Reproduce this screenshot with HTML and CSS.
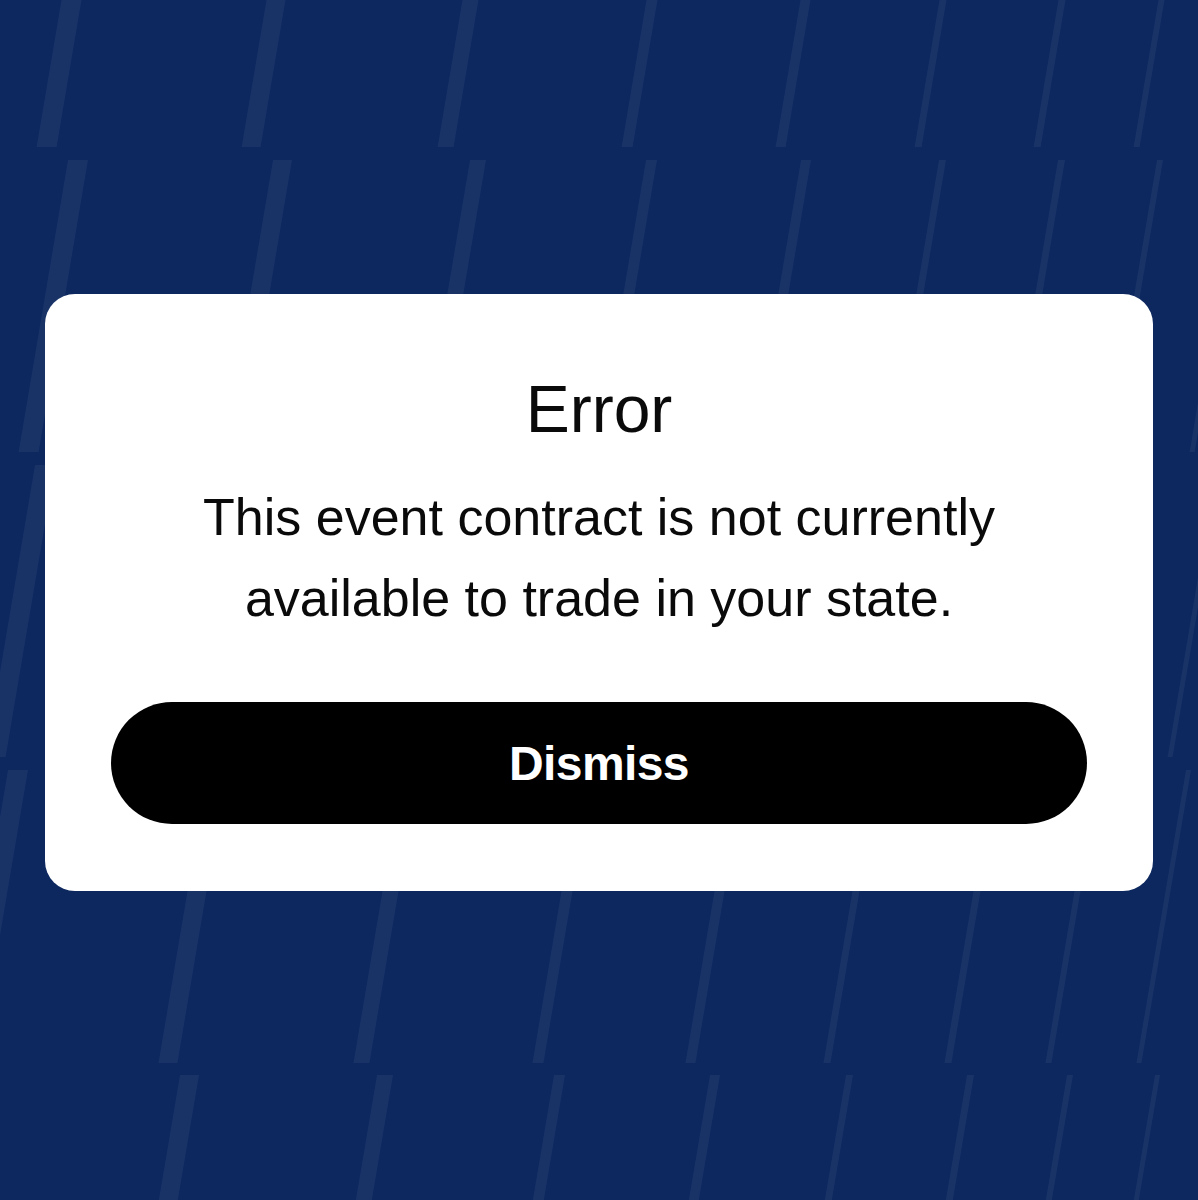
FILE: index.html
```html
<!DOCTYPE html>
<html lang="en">
<head>
  <meta charset="UTF-8">
  <meta name="viewport" content="width=device-width, initial-scale=1.0">
  <title>Error</title>
  <link rel="stylesheet" href="styles.css">
</head>
<body>
  <!-- Fondo con rayas inclinadas -->
  <svg class="backdrop" viewBox="0 0 1198 1200" preserveAspectRatio="none" aria-hidden="true">
    <g class="stripes" transform="translate(0,-145) skewX(-9.6)">
      <rect x="86" width="20" height="292"/>
      <rect x="291" width="19" height="292"/>
      <rect x="487" width="16" height="292"/>
      <rect x="671" width="11" height="292"/>
      <rect x="825" width="10" height="292"/>
      <rect x="964" width="7" height="292"/>
      <rect x="1083" width="7" height="292"/>
      <rect x="1183" width="6" height="292"/>
    </g>
    <g class="stripes" transform="translate(0,160) skewX(-9.6)">
      <rect x="68" width="20" height="292"/>
      <rect x="273" width="19" height="292"/>
      <rect x="470" width="16" height="292"/>
      <rect x="646" width="11" height="292"/>
      <rect x="801" width="10" height="292"/>
      <rect x="939" width="7" height="292"/>
      <rect x="1058" width="7" height="292"/>
      <rect x="1157" width="6" height="292"/>
      <rect x="1239" width="5" height="292"/>
    </g>
    <g class="stripes" transform="translate(0,465) skewX(-9.6)">
      <rect x="35" width="20" height="292"/>
      <rect x="241" width="19" height="292"/>
      <rect x="437" width="16" height="292"/>
      <rect x="615" width="11" height="292"/>
      <rect x="770" width="10" height="292"/>
      <rect x="909" width="7" height="292"/>
      <rect x="1029" width="7" height="292"/>
      <rect x="1129" width="6" height="292"/>
      <rect x="1217" width="5" height="292"/>
    </g>
    <g class="stripes" transform="translate(0,770) skewX(-9.6)">
      <rect x="8" width="20" height="293"/>
      <rect x="208" width="19" height="293"/>
      <rect x="403" width="16" height="293"/>
      <rect x="582" width="11" height="293"/>
      <rect x="735" width="10" height="293"/>
      <rect x="873" width="7" height="293"/>
      <rect x="994" width="7" height="293"/>
      <rect x="1095" width="6" height="293"/>
      <rect x="1186" width="5" height="293"/>
    </g>
    <g class="stripes" transform="translate(0,1075) skewX(-9.6)">
      <rect x="-20" width="20" height="292"/>
      <rect x="180" width="19" height="292"/>
      <rect x="377" width="16" height="292"/>
      <rect x="554" width="11" height="292"/>
      <rect x="710" width="10" height="292"/>
      <rect x="846" width="7" height="292"/>
      <rect x="967" width="7" height="292"/>
      <rect x="1067" width="6" height="292"/>
      <rect x="1155" width="5" height="292"/>
    </g>
  </svg>

  <main class="page">
    <div class="dialog" role="alertdialog" aria-labelledby="dialogTitle">
      <h2 id="dialogTitle" class="dialog-title">Error</h2>
      <p class="dialog-text">This event contract is not currently available to trade in your state.</p>
      <button class="dismiss-btn" type="button">Dismiss</button>
    </div>
  </main>
</body>
</html>
```

FILE: styles.css
```css
body {
  margin: 0;
  min-height: 1200px;
  position: relative;
  background-color: #0c285f;
  font-family: "Liberation Sans", Arial, sans-serif;
  overflow: hidden;
}

.backdrop {
  position: absolute;
  top: 0;
  left: 0;
  width: 100%;
  height: 1200px;
}

.stripes rect {
  fill: rgba(255, 255, 255, 0.055);
}

.page {
  position: relative;
  display: flex;
  justify-content: center;
  padding-top: 294px;
}

.dialog {
  width: 1108px;
  box-sizing: border-box;
  padding: 76px 66px 67px;
  background-color: white;
  border-radius: 30px;
  text-align: center;
}

.dialog-title {
  margin: 0;
  font-size: 66px;
  line-height: 79px;
  font-weight: normal;
  color: #0a0a0a;
}

.dialog-text {
  margin: 28px 0 0;
  font-size: 52px;
  line-height: 81px;
  color: #0a0a0a;
}

.dismiss-btn {
  display: block;
  width: 100%;
  height: 122px;
  margin-top: 63px;
  border: none;
  border-radius: 61px;
  background-color: black;
  color: white;
  font-family: "Liberation Sans", Arial, sans-serif;
  font-size: 48px;
  font-weight: bold;
  letter-spacing: -0.6px;
  cursor: pointer;
}
```
